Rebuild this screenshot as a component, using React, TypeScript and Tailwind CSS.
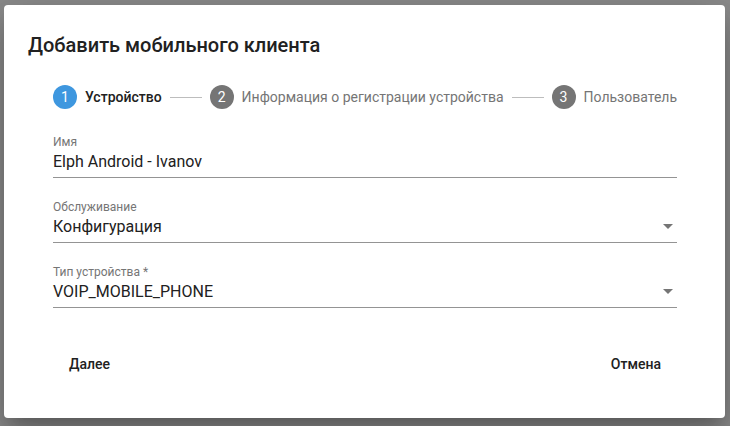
import * as React from "react";

type Step = { n: number; label: string; active?: boolean };

const steps: Step[] = [
  { n: 1, label: "Устройство", active: true },
  { n: 2, label: "Информация о регистрации устройства" },
  { n: 3, label: "Пользователь" },
];

function ArrowDrop() {
  return (
    <svg
      viewBox="0 0 24 24"
      className="pointer-events-none absolute right-[-3px] top-[14px] h-6 w-6 fill-[#757575]"
      aria-hidden="true"
    >
      <path d="M7 10l5 5 5-5z" />
    </svg>
  );
}

/** Material-style text field / select with an underline. */
function Field({
  label,
  value,
  select,
  className = "",
}: {
  label: string;
  value: string;
  select?: boolean;
  className?: string;
}) {
  return (
    <div className={`relative border-b border-[#949494] pb-[5px] ${className}`}>
      <div className="h-[14px] text-[12px] leading-[14px] text-[#757575]">{label}</div>
      <div className="mt-[3px] h-5 text-[16px] leading-5 text-[#212121]">{value}</div>
      {select && <ArrowDrop />}
    </div>
  );
}

function Stepper() {
  return (
    <div className="flex h-6 items-center">
      {steps.map((s, i) => (
        <React.Fragment key={s.n}>
          {i > 0 && <div className="mx-2 h-px flex-1 bg-[#bdbdbd]" />}
          <div className="flex items-center">
            <span
              className={`flex h-6 w-6 items-center justify-center rounded-full text-[14px] text-white ${
                s.active ? "bg-[#3e97df]" : "bg-[#757575]"
              }`}
            >
              {s.n}
            </span>
            <span
              className={`ml-2 text-[14px] leading-5 ${
                s.active ? "font-medium text-[#212121]" : "text-[#757575]"
              }`}
            >
              {s.label}
            </span>
          </div>
        </React.Fragment>
      ))}
    </div>
  );
}

export default function App() {
  return (
    <div
      className="h-[426px] w-[730px] overflow-hidden bg-[#8b8b8b] pl-[4px] pt-[5px]"
      style={{ fontFamily: "Roboto, 'Noto Sans', sans-serif" }}
    >
      <div className="flex h-[413px] w-[721px] flex-col rounded bg-white shadow-[0_11px_15px_-7px_rgba(0,0,0,0.2),0_24px_38px_3px_rgba(0,0,0,0.14),0_9px_46px_8px_rgba(0,0,0,0.12)]">
        <h2 className="px-6 pt-6 text-[20px] font-medium leading-8 text-[#212121]">
          Добавить мобильного клиента
        </h2>

        <div className="pl-[49px] pr-[48px] pt-6">
          <Stepper />

          <Field label="Имя" value="Elph Android - Ivanov" className="mt-[26px]" />
          <Field label="Обслуживание" value="Конфигурация" select className="mt-[22px]" />
          <Field label="Тип устройства *" value="VOIP_MOBILE_PHONE" select className="mt-[22px]" />
        </div>

        <div className="mt-[38px] flex items-center justify-between pl-[57px] pr-[56px]">
          <button className="h-9 rounded px-2 text-[14px] font-medium text-[#212121]">Далее</button>
          <button className="h-9 rounded px-2 text-[14px] font-medium text-[#212121]">Отмена</button>
        </div>
      </div>
    </div>
  );
}
